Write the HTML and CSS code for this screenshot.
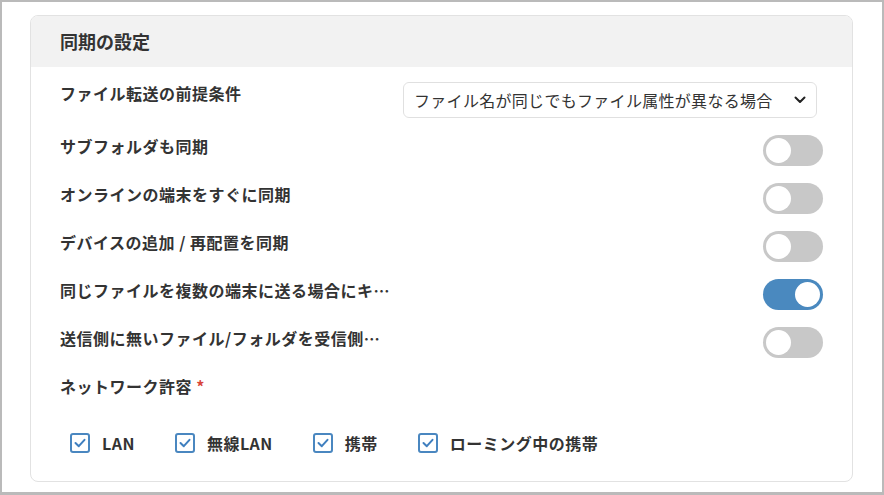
FILE: index.html
```html
<!DOCTYPE html>
<html lang="ja">
<head>
    <meta charset="UTF-8">
    <title>同期の設定</title>
    <link rel="stylesheet" href="styles.css">
</head>
<body>
    <div class="frame">
        <div class="card">
            <div class="card-header">同期の設定</div>
            <div class="card-body">
                <div class="row">
                    <div class="label">ファイル転送の前提条件</div>
                    <div class="select">
                        <span>ファイル名が同じでもファイル属性が異なる場合</span>
                        <svg width="12" height="8" viewBox="0 0 12 8"><path d="M1.5 1.5 L6 6 L10.5 1.5" fill="none" stroke="#222" stroke-width="2" stroke-linecap="round" stroke-linejoin="round"/></svg>
                    </div>
                </div>
                <div class="row">
                    <div class="label">サブフォルダも同期</div>
                    <div class="toggle"></div>
                </div>
                <div class="row">
                    <div class="label">オンラインの端末をすぐに同期</div>
                    <div class="toggle"></div>
                </div>
                <div class="row">
                    <div class="label">デバイスの追加 / 再配置を同期</div>
                    <div class="toggle"></div>
                </div>
                <div class="row">
                    <div class="label" title="同じファイルを複数の端末に送る場合にキャッシュを使用する">同じファイルを複数の端末に送る場合にキ…</div>
                    <div class="toggle on"></div>
                </div>
                <div class="row">
                    <div class="label" title="送信側に無いファイル/フォルダを受信側から削除する">送信側に無いファイル/フォルダを受信側…</div>
                    <div class="toggle"></div>
                </div>
                <div class="row">
                    <div class="label">ネットワーク許容 <span class="required">*</span></div>
                </div>
                <div class="checks">
                    <label class="check"><span class="box"><svg width="14" height="14" viewBox="0 0 14 14"><path d="M2.5 7 L5.8 10.2 L11.5 3.8" fill="none" stroke="#3f7fbf" stroke-width="2" stroke-linecap="round" stroke-linejoin="round"/></svg></span>LAN</label>
                    <label class="check"><span class="box"><svg width="14" height="14" viewBox="0 0 14 14"><path d="M2.5 7 L5.8 10.2 L11.5 3.8" fill="none" stroke="#3f7fbf" stroke-width="2" stroke-linecap="round" stroke-linejoin="round"/></svg></span>無線LAN</label>
                    <label class="check"><span class="box"><svg width="14" height="14" viewBox="0 0 14 14"><path d="M2.5 7 L5.8 10.2 L11.5 3.8" fill="none" stroke="#3f7fbf" stroke-width="2" stroke-linecap="round" stroke-linejoin="round"/></svg></span>携帯</label>
                    <label class="check"><span class="box"><svg width="14" height="14" viewBox="0 0 14 14"><path d="M2.5 7 L5.8 10.2 L11.5 3.8" fill="none" stroke="#3f7fbf" stroke-width="2" stroke-linecap="round" stroke-linejoin="round"/></svg></span>ローミング中の携帯</label>
                </div>
            </div>
        </div>
    </div>
</body>
</html>
```

FILE: styles.css
```css
body {
    margin: 0;
    font-family: "Noto Sans CJK JP", "Noto Sans", sans-serif;
    color: #333;
    background-color: #fff;
}
.frame {
    box-sizing: border-box;
    width: 884px;
    height: 495px;
    border: 2px solid #bababa;
    border-bottom-width: 3px;
    padding: 13px 29px 0 28px;
}
.card {
    border: 1px solid #e2e2e2;
    border-radius: 8px;
    overflow: hidden;
    height: 467px;
    box-sizing: border-box;
}
.card-header {
    background-color: #f2f2f2;
    height: 51px;
    line-height: 51px;
    padding-left: 29px;
    font-size: 18px;
    font-weight: bold;
    color: #333;
}
.card-body {
    padding: 15px 29px 0 29px;
}
.row {
    display: flex;
    justify-content: space-between;
    align-items: flex-start;
    margin-bottom: 17px;
}
.label {
    font-size: 16px;
    font-weight: bold;
    line-height: 20px;
    padding-top: 1px;
    letter-spacing: 0.5px;
    white-space: nowrap;
}
.required {
    color: #d9463b;
}
.select {
    box-sizing: border-box;
    width: 414px;
    height: 36px;
    margin-right: 6px;
    border: 1px solid #e0e0e0;
    border-radius: 6px;
    display: flex;
    align-items: center;
    justify-content: space-between;
    padding: 0 10px 0 10px;
    font-size: 16px;
    letter-spacing: 0.3px;
}
.toggle {
    position: relative;
    width: 60px;
    height: 31px;
    border-radius: 16px;
    background-color: #c8c8c8;
}
.toggle::after {
    content: "";
    position: absolute;
    top: 3px;
    left: 3px;
    width: 25px;
    height: 25px;
    border-radius: 50%;
    background-color: #fff;
}
.toggle.on {
    background-color: #4a89bf;
}
.toggle.on::after {
    left: 32px;
}
.checks {
    display: flex;
    gap: 40px;
    padding: 18px 0 0 10px;
}
.check {
    display: flex;
    align-items: center;
    gap: 12px;
    font-size: 16px;
    font-weight: bold;
    letter-spacing: 0.5px;
}
.box {
    box-sizing: border-box;
    width: 20px;
    height: 20px;
    border: 2px solid #4a87c0;
    border-radius: 3px;
    display: flex;
    align-items: center;
    justify-content: center;
}
```
